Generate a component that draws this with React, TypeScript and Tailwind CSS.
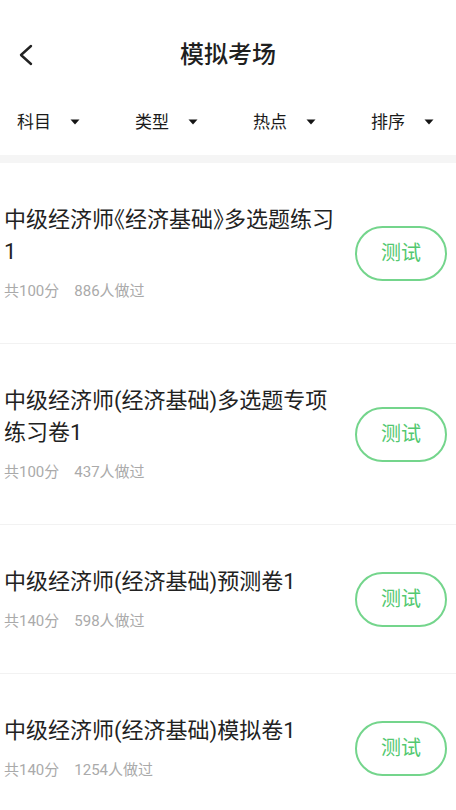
import React from "react";

const items = [
  { title: "中级经济师《经济基础》多选题练习1", score: "共100分", count: "886人做过" },
  { title: "中级经济师(经济基础)多选题专项练习卷1", score: "共100分", count: "437人做过" },
  { title: "中级经济师(经济基础)预测卷1", score: "共140分", count: "598人做过" },
  { title: "中级经济师(经济基础)模拟卷1", score: "共140分", count: "1254人做过" },
];

const filters = ["科目", "类型", "热点", "排序"];

function Caret() {
  return (
    <svg width="10" height="6" viewBox="0 0 10 6" className="ml-[19px]">
      <polygon points="0.5,0.5 9.5,0.5 5,5.5" fill="#151515" />
    </svg>
  );
}

export default function App() {
  return (
    <div className="min-h-[810px] overflow-hidden bg-white font-['Roboto','Noto_Sans_CJK_SC',sans-serif] text-[#222]">
      <div className="grid h-[110px] grid-cols-[1fr_auto_1fr] items-center">
        <div className="pl-[18px]">
          <svg width="16" height="22" viewBox="0 0 16 22">
            <polyline points="13,2 3,11 13,20" fill="none" stroke="#222" strokeWidth="2.4" strokeLinecap="round" strokeLinejoin="round" />
          </svg>
        </div>
        <div className="text-[24px] leading-[32px] font-medium text-[#1f1f1f]">模拟考场</div>
        <div />
      </div>
      <div className="flex h-[45px] items-start pl-[17px]">
        {filters.map((f) => (
          <div key={f} className="flex w-[118px] shrink-0 items-center">
            <span className="text-[17px] leading-[24px] text-[#1a1a1a]">{f}</span>
            <Caret />
          </div>
        ))}
      </div>
      <div className="h-[8px] bg-[#f5f5f5]" />
      {items.map((it, i) => (
        <div key={i} className="flex items-center border-b border-[#f2f2f2] py-[41px] pl-[4px] pr-[9px]">
          <div className="flex-1 pr-[15px]">
            <div className="text-[22px] leading-[32px] text-[#222] [font-feature-settings:'halt']">{it.title}</div>
            <div className="mt-[12px] flex gap-[15px] text-[15px] leading-[22px] text-[#aaaaaa]">
              <span>{it.score}</span>
              <span>{it.count}</span>
            </div>
          </div>
          <button className="flex h-[55px] w-[92px] shrink-0 items-center justify-center rounded-full border-2 border-[#74d58c] text-[20px] text-[#52c870]">
            测试
          </button>
        </div>
      ))}
    </div>
  );
}
